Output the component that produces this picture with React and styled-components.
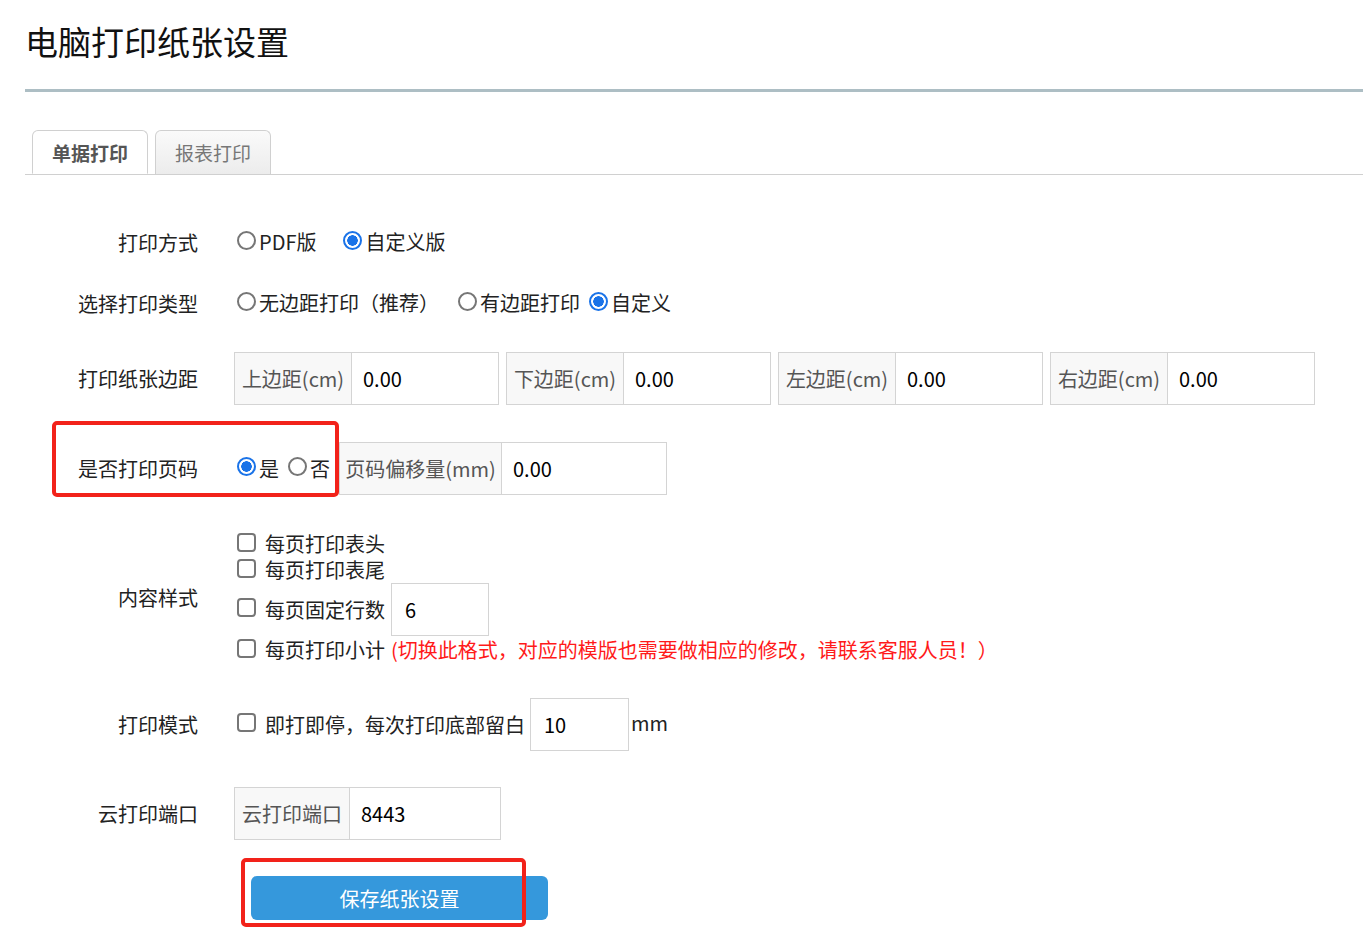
import React from "react";
import styled, { createGlobalStyle } from "styled-components";

const GlobalStyle = createGlobalStyle`
  body {
    margin: 0;
    background: #fff;
    font-family: "Noto Sans CJK SC", "Microsoft YaHei", "Noto Sans", sans-serif;
    color: #222;
  }
`;

const Page = styled.div`
  padding: 17px 0 40px 25px;
  font-size: 20px;
`;

const Header = styled.div`
  border-bottom: 3px solid #adbec4;
  padding-bottom: 24px;
`;

const Title = styled.h1`
  margin: 0;
  font-size: 33px;
  font-weight: 400;
  line-height: 48px;
  color: #111;
`;

const TabBar = styled.div`
  display: flex;
  gap: 7px;
  margin-top: 38px;
  padding-left: 7px;
  border-bottom: 1px solid #d0d0d0;
  height: 44px;
`;

const Tab = styled.div`
  width: 116px;
  height: 44px;
  box-sizing: border-box;
  border: 1px solid #d0d0d0;
  border-bottom: ${(p) => (p.$active ? "1px solid #fff" : "none")};
  border-radius: 6px 6px 0 0;
  background: ${(p) => (p.$active ? "#fff" : "linear-gradient(#fafafa, #ececec)")};
  color: ${(p) => (p.$active ? "#555" : "#777")};
  font-weight: ${(p) => (p.$active ? 700 : 400)};
  font-size: 19px;
  display: flex;
  align-items: center;
  justify-content: center;
  margin-bottom: -1px;
`;

const Row = styled.div`
  position: relative;
  display: flex;
  align-items: center;
  margin-top: ${(p) => p.$top}px;
`;

const Label = styled.div`
  width: 173px;
  margin-right: 36px;
  text-align: right;
  flex-shrink: 0;
  color: #222;
`;

const Controls = styled.div`
  display: flex;
  align-items: center;
  gap: ${(p) => p.$gap || 0}px;
`;

const Option = styled.label`
  display: flex;
  align-items: center;
  line-height: 30px;
  margin-right: ${(p) => p.$gap || 0}px;
  white-space: nowrap;
`;

const Radio = styled.input.attrs({ type: "radio" })`
  appearance: none;
  width: 19px;
  height: 19px;
  box-sizing: border-box;
  margin: 0 3px 4px 3px;
  border: 2px solid #767676;
  border-radius: 50%;
  background: #fff;
  flex-shrink: 0;

  &:checked {
    border-color: #1a73e8;
    background: radial-gradient(circle, #1a73e8 0 5px, #fff 5.5px);
  }
`;

const Check = styled.input.attrs({ type: "checkbox" })`
  appearance: none;
  width: 19px;
  height: 19px;
  box-sizing: border-box;
  margin: 0 9px 4px 3px;
  border: 2px solid #767676;
  border-radius: 4px;
  background: #fff;
  flex-shrink: 0;
`;

const Group = styled.div`
  display: flex;
  height: 53px;
  box-sizing: border-box;
  border: 1px solid #d4d4d4;
  margin-left: ${(p) => p.$left || 0}px;
`;

const Addon = styled.div`
  width: ${(p) => p.$w}px;
  box-sizing: border-box;
  background: #f8f8f8;
  border-right: 1px solid #d4d4d4;
  color: #555;
  display: flex;
  align-items: center;
  justify-content: center;
  white-space: nowrap;
`;

const Field = styled.div`
  width: ${(p) => p.$w}px;
  box-sizing: border-box;
  padding-left: 11px;
  display: flex;
  align-items: center;
  color: #000;
  background: #fff;
`;

const Box = styled.div`
  width: ${(p) => p.$w}px;
  height: 53px;
  box-sizing: border-box;
  border: 1px solid #d4d4d4;
  padding-left: 13px;
  display: flex;
  align-items: center;
  color: #000;
  margin-left: ${(p) => p.$left || 0}px;
`;

const Stack = styled.div`
  display: flex;
  flex-direction: column;
`;

const Line = styled.div`
  display: flex;
  align-items: center;
  height: ${(p) => p.$h || 26}px;
  line-height: 24px;
  white-space: nowrap;
`;

const Warn = styled.span`
  color: #ff1a1a;
  margin-left: 6px;
`;

const Unit = styled.span`
  margin-left: 2px;
  align-self: flex-start;
  line-height: 50px;
`;

const SaveButton = styled.button`
  margin-left: 226px;
  width: 297px;
  height: 44px;
  border: none;
  border-radius: 6px;
  background: #3598dc;
  color: #fff;
  font-family: inherit;
  font-size: 20px;
`;

const Mark = styled.div`
  position: absolute;
  left: ${(p) => p.$x}px;
  top: ${(p) => p.$y}px;
  width: ${(p) => p.$w}px;
  height: ${(p) => p.$h}px;
  box-sizing: border-box;
  border: 4px solid #f2221a;
  border-radius: 5px;
  pointer-events: none;
`;

const margins = [
  ["上边距(cm)", "0.00"],
  ["下边距(cm)", "0.00"],
  ["左边距(cm)", "0.00"],
  ["右边距(cm)", "0.00"],
];

export default function App() {
  return (
    <Page>
      <GlobalStyle />
      <Header>
        <Title>电脑打印纸张设置</Title>
      </Header>

      <TabBar>
        <Tab $active>单据打印</Tab>
        <Tab>报表打印</Tab>
      </TabBar>

      <Row $top={52}>
        <Label>打印方式</Label>
        <Controls>
          <Option $gap={24}>
            <Radio name="mode" />PDF版
          </Option>
          <Option>
            <Radio name="mode" defaultChecked />自定义版
          </Option>
        </Controls>
      </Row>

      <Row $top={31}>
        <Label>选择打印类型</Label>
        <Controls>
          <Option $gap={16}>
            <Radio name="type" />无边距打印（推荐）
          </Option>
          <Option $gap={6}>
            <Radio name="type" />有边距打印
          </Option>
          <Option>
            <Radio name="type" defaultChecked />自定义
          </Option>
        </Controls>
      </Row>

      <Row $top={34}>
        <Label>打印纸张边距</Label>
        <Controls $gap={7}>
          {margins.map(([name, val]) => (
            <Group key={name}>
              <Addon $w={117}>{name}</Addon>
              <Field $w={146}>{val}</Field>
            </Group>
          ))}
        </Controls>
      </Row>

      <Row $top={37}>
        <Mark $x={27} $y={-21} $w={287} $h={76} />
        <Label>是否打印页码</Label>
        <Controls>
          <Option $gap={6}>
            <Radio name="page" defaultChecked />是
          </Option>
          <Option>
            <Radio name="page" />否
          </Option>
          <Group $left={9}>
            <Addon $w={162}>页码偏移量(mm)</Addon>
            <Field $w={164}>0.00</Field>
          </Group>
        </Controls>
      </Row>

      <Row $top={36}>
        <Label>内容样式</Label>
        <Stack>
          <Line>
            <Check />每页打印表头
          </Line>
          <Line>
            <Check />每页打印表尾
          </Line>
          <Line $h={53}>
            <Check />每页固定行数
            <Box $w={98} $left={6}>6</Box>
          </Line>
          <Line $h={28}>
            <Check />每页打印小计
            <Warn>(切换此格式，对应的模版也需要做相应的修改，请联系客服人员！）</Warn>
          </Line>
        </Stack>
      </Row>

      <Row $top={34}>
        <Label>打印模式</Label>
        <Controls>
          <Line>
            <Check />即打即停，每次打印底部留白
          </Line>
          <Box $w={99} $left={5}>10</Box>
          <Unit>mm</Unit>
        </Controls>
      </Row>

      <Row $top={36}>
        <Label>云打印端口</Label>
        <Group>
          <Addon $w={115}>云打印端口</Addon>
          <Field $w={150}>8443</Field>
        </Group>
      </Row>

      <Row $top={36}>
        <Mark $x={216} $y={-18} $w={285} $h={69} />
        <SaveButton>保存纸张设置</SaveButton>
      </Row>
    </Page>
  );
}
